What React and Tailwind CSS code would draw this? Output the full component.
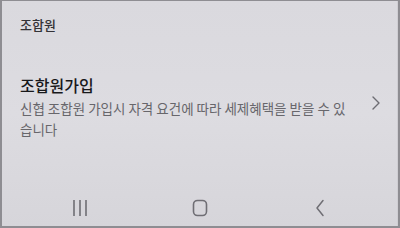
export default function App() {
  const font = { fontFamily: '"Noto Sans CJK KR", "Noto Sans", sans-serif' };
  return (
    <div className="w-[400px] h-[228px] bg-[#8e8d92] pl-[2px] pt-[1px] pr-[2px] pb-[2px]" style={font}>
      <div className="h-full w-full flex flex-col bg-linear-to-b from-[#dad9de] via-[#dddce1] to-[#d6d5da] border-r border-[#cfced3]">
        <div className="h-[47px] flex items-center pl-[18px] text-[13px] leading-none font-medium text-[#333236]">
          조합원
        </div>
        <div className="flex items-center pt-[26px] pl-[18px] pr-[16px]">
          <div className="flex-1 flex flex-col">
            <div className="text-[16px] leading-[22px] font-medium text-[#18181b]">조합원가입</div>
            <div className="mt-[2px] text-[13.5px] leading-[21px] text-[#67666b]">
              신협 조합원 가입시 자격 요건에 따라 세제혜택을 받을 수 있<br />습니다
            </div>
          </div>
          <svg width="10" height="16" viewBox="0 0 10 16" className="mb-[8px]">
            <path d="M2 2 L8 8 L2 14" fill="none" stroke="#6d6c72" strokeWidth="1.4" strokeLinecap="round" strokeLinejoin="round" />
          </svg>
        </div>
        <div className="flex-1" />
        <div className="h-[26px] mb-[5px] grid grid-cols-[120px_120px_120px] justify-center items-center">
          <div className="flex justify-center">
            <svg width="16" height="18" viewBox="0 0 16 18">
              <path d="M2 1 V17 M8 1 V17 M14 1 V17" stroke="#6f6e74" strokeWidth="1.6" />
            </svg>
          </div>
          <div className="flex justify-center">
            <svg width="16" height="18" viewBox="0 0 16 18">
              <rect x="1.5" y="1.5" width="13" height="15" rx="4" fill="none" stroke="#6f6e74" strokeWidth="1.6" />
            </svg>
          </div>
          <div className="flex justify-center">
            <svg width="10" height="18" viewBox="0 0 10 18">
              <path d="M8 1.5 L2 9 L8 16.5" fill="none" stroke="#6f6e74" strokeWidth="1.5" strokeLinecap="round" strokeLinejoin="round" />
            </svg>
          </div>
        </div>
      </div>
    </div>
  );
}
